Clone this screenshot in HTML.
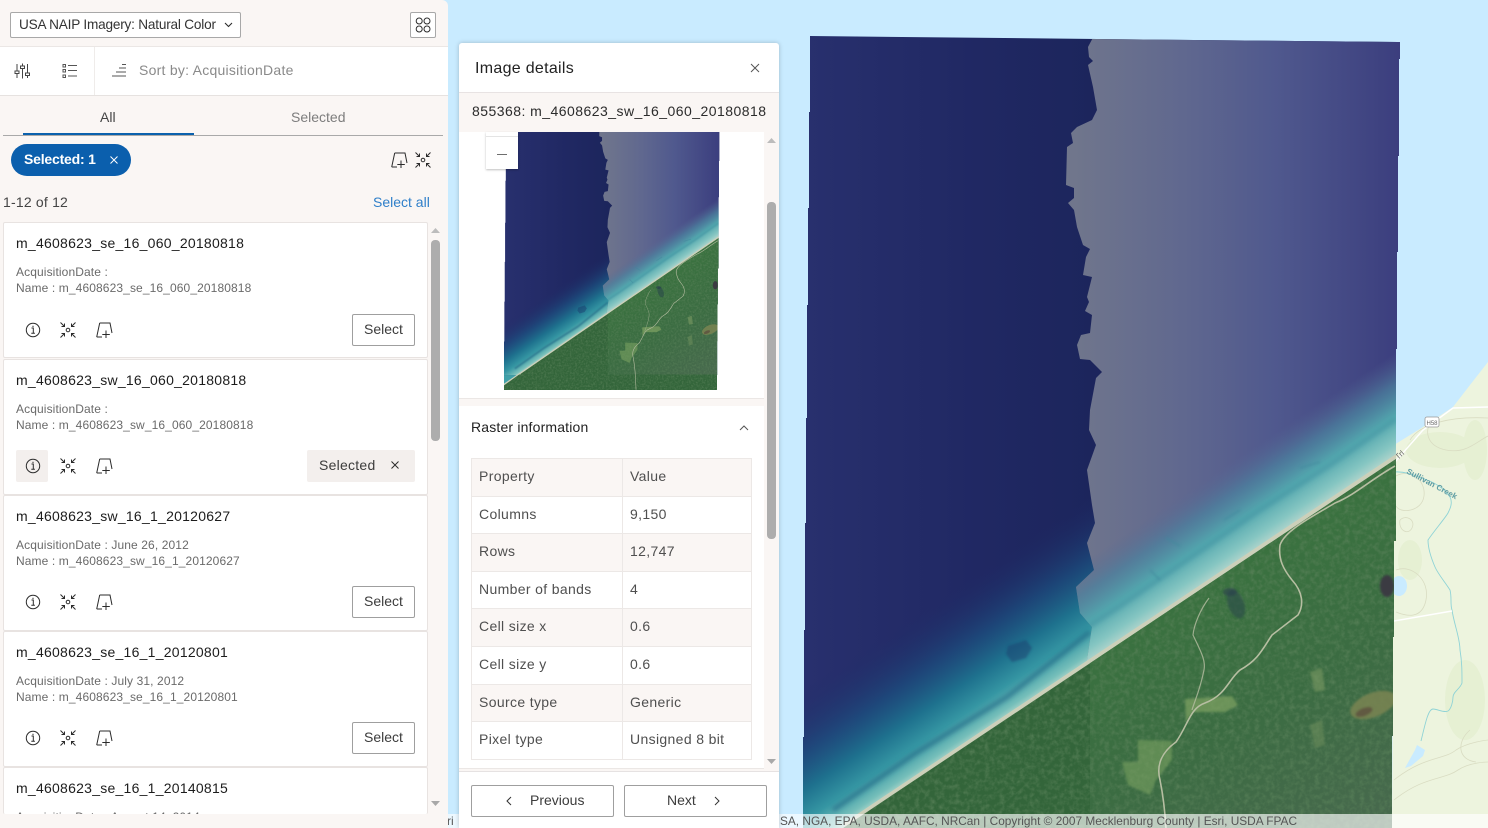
<!DOCTYPE html>
<html><head><meta charset="utf-8"><style>
html,body{margin:0;padding:0;width:1488px;height:828px;overflow:hidden;background:#c9ebff;font-family:"Liberation Sans",sans-serif;color:#323232}
.a{position:absolute}
.t{position:absolute;white-space:nowrap;line-height:16px}
#left{position:absolute;left:0;top:0;width:448px;height:828px;background:#faf6f4;border-top-right-radius:6px;overflow:hidden}
.card{position:absolute;left:3px;width:423px;height:134px;background:#fff;border:1px solid #e8e3e1;border-radius:2px;overflow:hidden}
.card .ti{position:absolute;left:12px;top:12px;font-size:14px;color:#1c1c1c;white-space:nowrap;line-height:17px;letter-spacing:.25px}
.card .d{position:absolute;left:12px;top:40.5px;font-size:12px;color:#6a6a6a;line-height:16.4px;white-space:nowrap;letter-spacing:.11px}
.btn{position:absolute;border:1px solid #9f9f9f;border-radius:2px;background:#fff;box-sizing:border-box;font-size:14px;color:#3c3c3c;text-align:center}
svg.i{position:absolute;fill:none;stroke:#2b2b2b;stroke-width:1}
#panel{position:absolute;left:459px;top:43px;width:320px;height:785px;background:#fff;border-radius:3px 3px 0 0;box-shadow:0 0 5px rgba(0,0,0,.22);overflow:hidden}
.row{position:absolute;left:471px;width:281px;box-sizing:border-box;border:1px solid #ece8e6;font-size:14px;color:#4f4f4f;letter-spacing:.35px}
.row span{position:absolute;top:50%;margin-top:-9.5px;line-height:16px;white-space:nowrap}
.row .k{left:7px}.row .v{left:158px}
.row i{position:absolute;left:150px;top:0;bottom:0;width:1px;background:#ece8e6}
</style></head><body>
<svg class="a" style="left:0;top:0" width="1488" height="828" viewBox="0 0 1488 828">
<defs>
<linearGradient id="deep" gradientUnits="userSpaceOnUse" x1="803" y1="0" x2="1095" y2="0"><stop offset="0" stop-color="#28306e"/><stop offset=".6" stop-color="#202863"/><stop offset="1" stop-color="#1c255c"/></linearGradient>
<linearGradient id="haze" gradientUnits="userSpaceOnUse" x1="1066" y1="0" x2="1400" y2="0"><stop offset="0" stop-color="#71778c"/><stop offset=".35" stop-color="#60688f"/><stop offset=".62" stop-color="#50598e"/><stop offset="1" stop-color="#3b3e7e"/></linearGradient>
<linearGradient id="shL" gradientUnits="userSpaceOnUse" x1="1090" y1="663" x2="1013" y2="548"><stop offset="0" stop-color="#b5d8cc"/><stop offset=".06" stop-color="#76bfba"/><stop offset=".2" stop-color="#3596a3"/><stop offset=".38" stop-color="#1e7590" stop-opacity=".95"/><stop offset=".62" stop-color="#1c5080" stop-opacity=".72"/><stop offset="1" stop-color="#1f2a66" stop-opacity="0"/></linearGradient>
<linearGradient id="shR" gradientUnits="userSpaceOnUse" x1="1090" y1="663" x2="1041" y2="590"><stop offset="0" stop-color="#b5d6cd"/><stop offset=".14" stop-color="#86c6c2"/><stop offset=".4" stop-color="#53a7ae"/><stop offset=".7" stop-color="#4c829f" stop-opacity=".72"/><stop offset="1" stop-color="#566a94" stop-opacity="0"/></linearGradient>
<linearGradient id="frs" gradientUnits="userSpaceOnUse" x1="1150" y1="600" x2="1300" y2="860"><stop offset="0" stop-color="#3a723f"/><stop offset=".5" stop-color="#3b6c42"/><stop offset="1" stop-color="#47694d"/></linearGradient>
<filter id="b2" x="-20%" y="-20%" width="140%" height="140%"><feGaussianBlur stdDeviation="2.2"/></filter>
<filter id="b1" x="-10%" y="-10%" width="120%" height="120%"><feGaussianBlur stdDeviation="1"/></filter>
<filter id="noise" x="0" y="0" width="100%" height="100%"><feTurbulence type="fractalNoise" baseFrequency=".2" numOctaves="3" seed="4"/><feColorMatrix values="0 0 0 0 .1  0 0 0 0 .22  0 0 0 0 .1  1.5 0 0 0 -.6"/></filter>
<clipPath id="cp"><polygon points="810,36 1097,39 1400,42 1400,59 1399,59 1399,156 1398,156 1398,252 1397,252 1397,349 1396,349 1396,541 1394,541 1394,637 1393,637 1393,736 1392,736 1392,828 803,828 803,737 804,737 804,630 805,630 805,523 806,523 806,418 807,418 807,305 808,305 808,208 809,208 809,112 810,112"/></clipPath>
<clipPath id="hz"><polygon points="1097,30 1088,47 1089,57 1093,61 1088,65 1093,87 1097,110 1092,120 1077,127 1071,133 1073,143 1067,147 1066,185 1074,188 1074,198 1068,203 1074,210 1077,227 1083,245 1090,249 1086,257 1083,275 1092,277 1087,297 1089,302 1085,311 1092,315 1090,333 1081,335 1077,345 1080,359 1090,360 1102,372 1096,378 1090,410 1089,430 1096,445 1087,470 1092,505 1095,523 1087,543 1094,570 1076,587 1080,613 1092,627 1087,660 1090,828 1420,828 1420,30"/></clipPath>
<clipPath id="ld"><polygon points="1402,455 843,828 1402,828"/></clipPath>
<clipPath id="ldx"><polygon points="845,826 1392,826 1392,868 803,868 803,855"/></clipPath>
<g id="scene"><g clip-path="url(#cp)">
<rect x="803" y="30" width="598" height="798" fill="url(#deep)"/>
<rect x="803" y="30" width="598" height="798" fill="url(#shL)"/>
<g filter="url(#b2)" fill="none" stroke="#1a5f80" opacity=".55"><path d="M1090 632 L1007 697 L916 753 L833 810" stroke-width="5"/></g>
<g filter="url(#b1)" fill="#1d3f6f" opacity=".5"><path d="M1008 646l18-6 6 8-6 10-14 4-6-8z"/></g>
<g clip-path="url(#hz)"><rect x="1060" y="30" width="341" height="798" fill="url(#haze)"/><rect x="1060" y="30" width="341" height="798" fill="url(#shR)"/>
<g filter="url(#b2)" fill="none" stroke="#3d8fa0" opacity=".5"><path d="M1396 419 L1330 465 L1260 510 L1190 558 L1120 606 L1080 632" stroke-width="5"/></g>
<g filter="url(#b1)" fill="none" stroke="#40889c" opacity=".5" stroke-width="2"><path d="M1300 468l20-6M1240 510l-16 10M1180 546l-14-8M1150 570l10 10"/></g></g>
<path d="M1400 455 L845 826" stroke="#ccd0ba" stroke-width="6" fill="none"/>
<g clip-path="url(#ld)"><polygon points="843,828 1402,447 1402,828" fill="#33653a"/>
<polygon points="1090,660 1402,452 1402,828 1090,828" fill="url(#frs)"/>
<rect x="843" y="447" width="559" height="381" filter="url(#noise)"/>
<g filter="url(#b1)"><polygon points="1185,699 1232,696 1238,705 1225,712 1193,712 1186,722" fill="#7fa262" opacity=".7"/><polygon points="1138,740 1172,741 1172,760 1156,780 1150,795 1128,785 1122,762 1138,762" fill="#78a05f" opacity=".6"/><polygon points="1310,672 1322,668 1325,690 1315,692" fill="#7b9a62" opacity=".6"/><polygon points="1310,725 1322,720 1325,745 1315,748" fill="#70925c" opacity=".5"/>
<ellipse cx="1373" cy="705" rx="24" ry="12" fill="#7a8451" opacity=".85" transform="rotate(-22 1373 705)"/><ellipse cx="1364" cy="712" rx="9" ry="4" fill="#5a4a3c" opacity=".7" transform="rotate(-22 1364 712)"/>
<ellipse cx="1387" cy="586" rx="7" ry="11" fill="#3a3a42"/><ellipse cx="1236" cy="604" rx="8" ry="15" fill="#2b4d48" opacity=".65" transform="rotate(-20 1236 604)"/><ellipse cx="1230" cy="592" rx="7" ry="4" fill="#2c3f50" opacity=".6"/></g>
<g fill="none" stroke="#b7bea2" stroke-width="1.6"><path d="M1395 466 C1370 480 1355 495 1335 503 C1315 515 1285 530 1280 545 C1278 560 1284 570 1292 580 C1303 592 1304 605 1298 615 L1272 635 C1262 650 1258 660 1240 670 C1228 680 1226 695 1205 703 C1190 708 1188 725 1176 742 C1162 752 1156 765 1160 780 C1163 795 1165 812 1166 828"/><path d="M1209 598 C1200 610 1194 625 1193 635 C1200 650 1206 660 1204 670 C1200 690 1195 700 1192 710" stroke-width="1.2" opacity=".8"/></g></g>
</g></g>
</defs>
<polygon points="1394,445 1423,427 1453,407 1470,385 1488,362 1488,828 1392,828" fill="#edf4de"/>
<g fill="#e6f0d3"><ellipse cx="1440" cy="450" rx="34" ry="18"/><ellipse cx="1465" cy="700" rx="20" ry="40"/><ellipse cx="1410" cy="560" rx="12" ry="20"/><ellipse cx="1475" cy="450" rx="12" ry="30"/></g>
<g fill="none" stroke="#d9dcc2" stroke-width=".8"><path d="M1396 476c14-8 30 4 28 20s-24 18-28 10M1400 520c6-6 16 0 12 8s-14 2-12-8M1396 570c16-6 34 10 30 30s-20 16-30 12M1394 780c30-24 50-20 62-30 12-8 32-10 32-10M1394 800c30-24 50-20 64-30 12-8 30-8 30-8M1470 730c-14 12-12 30 6 32M1432 420c-8 10-6 26 14 30s30-8 42-14M1410 440c10-16 40-24 78-22"/></g>
<ellipse cx="1399" cy="586" rx="8" ry="10" fill="#c9ebff"/><path d="M1405 768l10-18 2-5 8 5-2 6-12 10z" fill="#c9ebff"/>
<g fill="none"><path d="M1394 472c12-1 22 4 33 8s18 10 23 17c3 6 0 12-2 16s-14 18-20 27c0 10 4 20 7 27s10 15 15 23c2 8 0 14 2 20 2 14 8 28 8 40 2 12 2 22 2 33-2 6-9 9-9 14s-2 12-5 14c-5 2-10-2-15-2s-8 16-12 32" stroke="#8fd3d6" stroke-width=".9"/><path d="M1394 621l58-10M1395 462l28-32 30-22 35-1" stroke="#fff" stroke-width="1.4"/></g>
<rect x="1425" y="417" width="14" height="10" rx="2" fill="#fff" stroke="#999" stroke-width=".8"/><text x="1432" y="425" font-size="6" fill="#666" text-anchor="middle">H58</text>
<text x="1398" y="460" font-size="8" fill="#6d6d6d" transform="rotate(-42 1398 460)">Trl</text>
<text x="1406" y="473" font-size="8" font-weight="bold" fill="#5d9ba2" textLength="56" transform="rotate(28 1406 473)">Sullivan Creek</text>
<use href="#scene"/>
<rect x="0" y="814" width="1488" height="14" fill="#fff" opacity=".65"/>
<text x="447" y="825" font-size="12" fill="#555">ri</text>
<text x="780" y="825" font-size="12" fill="#555" textLength="517" lengthAdjust="spacingAndGlyphs">SA, NGA, EPA, USDA, AAFC, NRCan | Copyright © 2007 Mecklenburg County | Esri, USDA FPAC</text>
</svg>

<div id="left">
<div class="btn" style="left:10px;top:12px;width:231px;height:26px;border-color:#a8a8a8"></div>
<div class="t" id="dd" style="left:19px;top:17px;font-size:13.6px;color:#333;letter-spacing:-.2px">USA NAIP Imagery: Natural Color</div>
<svg class="i" style="left:224px;top:20px" width="9" height="9" viewBox="0 0 9 9"><path d="M1 3l3.5 3.5L8 3" stroke-width="1.1"/></svg>
<div class="btn" style="left:410px;top:12px;width:26px;height:26px;border-color:#a8a8a8"></div>
<svg class="i" style="left:414px;top:16px" width="18" height="18" viewBox="0 0 18 18"><circle cx="5.2" cy="5" r="3"/><circle cx="13" cy="5" r="3"/><circle cx="5.2" cy="13" r="3"/><circle cx="13" cy="13" r="3"/></svg>
<div class="a" style="left:0;top:46px;width:448px;height:50px;background:#fff;border-top:1px solid #ebe7e5;border-bottom:1px solid #e6e2e0;box-sizing:border-box"></div>
<div class="a" style="left:94px;top:47px;width:1px;height:48px;background:#efecea"></div>
<svg class="i" style="left:14px;top:62px;stroke:#444" width="18" height="18" viewBox="0 0 18 18"><path d="M3 2v14M8.500 1.500v15M13.500 2v14"/><rect x="1" y="9" width="4" height="2.500" fill="#fff"/><rect x="6.500" y="4" width="4" height="2.500" fill="#fff"/><rect x="11.500" y="11" width="4" height="2.500" fill="#fff"/></svg>
<svg class="i" style="left:62px;top:63px;stroke:#555" width="16" height="16" viewBox="0 0 16 16"><rect x="1" y="1.500" width="2.500" height="2.500"/><rect x="1" y="6.500" width="2.500" height="2.500"/><rect x="1" y="12" width="2.500" height="2.500"/><path d="M6 2.500h9M6 7.500h9M6 13h9"/></svg>
<svg class="i" style="left:111px;top:63px;stroke:#555" width="16" height="16" viewBox="0 0 16 16"><path d="M11 1.500h4M8 5h7M5 9h10M1 13h14"/></svg>
<div class="t" id="sort" style="left:139px;top:62px;font-size:14px;color:#8a8a8a;letter-spacing:.25px">Sort by: AcquisitionDate</div>
<div class="t" style="left:100px;top:109px;font-size:14px;color:#444">All</div>
<div class="t" style="left:291px;top:109px;font-size:14px;color:#7d7d7d">Selected</div>
<div class="a" style="left:3px;top:135px;width:440px;height:1px;background:#a9a9a9"></div>
<div class="a" style="left:23px;top:133px;width:171px;height:2px;background:#0b61ad"></div>
<div class="a" style="left:11px;top:144px;width:120px;height:32px;border-radius:16px;background:#0b5fad"></div>
<div class="t" style="left:24px;top:151px;font-size:14px;font-weight:bold;color:#fff;letter-spacing:-.2px">Selected: 1</div>
<svg class="i" style="left:109px;top:155px;stroke:#fff" width="10" height="10" viewBox="0 0 10 10"><path d="M1.500 1.500l7 7M8.500 1.500l-7 7"/></svg>
<svg class="i" style="left:390px;top:151px" width="18" height="18" viewBox="0 0 18 18"><path d="M4.700 2h10.300l2 10M1.700 16L4.700 2M1.700 16H7M11 9.500v7.500M7.300 13.500h7.500"/></svg>
<svg class="i" style="left:414px;top:151px" width="18" height="18" viewBox="0 0 18 18"><circle cx="9" cy="9" r="1.800"/><path d="M1.500 1.500l4 4M5.500 2.500v3h-3M16.500 1.500l-4 4M12.500 2.500v3h3M1.500 16.500l4-4M5.500 15.500v-3h-3M16.500 16.500l-4-4M12.500 15.500v-3h3"/></svg>
<div class="t" style="left:3px;top:194px;font-size:14px;color:#444;letter-spacing:.2px">1-12 of 12</div>
<div class="t" id="sa" style="left:373px;top:194px;font-size:14px;color:#2f7fc9">Select all</div>

<div class="card" style="top:222px"><div class="ti">m_4608623_se_16_060_20180818</div><div class="d" style="top:41px">AcquisitionDate :<br>Name : m_4608623_se_16_060_20180818</div></div>
<div class="card" style="top:359px"><div class="ti">m_4608623_sw_16_060_20180818</div><div class="d">AcquisitionDate :<br>Name : m_4608623_sw_16_060_20180818</div></div>
<div class="card" style="top:495px"><div class="ti">m_4608623_sw_16_1_20120627</div><div class="d">AcquisitionDate : June 26, 2012<br>Name : m_4608623_sw_16_1_20120627</div></div>
<div class="card" style="top:631px"><div class="ti">m_4608623_se_16_1_20120801</div><div class="d">AcquisitionDate : July 31, 2012<br>Name : m_4608623_se_16_1_20120801</div></div>
<div class="card" style="top:767px;height:46px;border-bottom:0"><div class="ti">m_4608623_se_16_1_20140815</div><div class="d">AcquisitionDate : August 14, 2014</div></div>
<div class="a" style="left:16px;top:450px;width:32px;height:32px;background:#f3efed;border-radius:2px"></div>
<svg width="0" height="0" style="position:absolute"><defs>
<g id="ic" fill="none" stroke="#2b2b2b" stroke-width="1"><circle cx="17" cy="16" r="6.700"/><path d="M15.500 14h1.800v5M15.300 19.300h3.600M17 11.800v1.200"/><g transform="translate(43,7)"><circle cx="9" cy="9" r="1.800"/><path d="M1.500 1.500l4 4M5.500 2.500v3h-3M16.500 1.500l-4 4M12.500 2.500v3h3M1.500 16.500l4-4M5.500 15.500v-3h-3M16.500 16.500l-4-4M12.500 15.500v-3h3"/></g><g transform="translate(79,7)"><path d="M4.700 2h10.300l2 10M1.700 16L4.700 2M1.700 16H7M11 9.500v7.500M7.300 13.500h7.500"/></g></g></defs></svg>
<svg class="a" style="left:16px;top:314px" width="104" height="32"><use href="#ic"/></svg>
<svg class="a" style="left:16px;top:450px" width="104" height="32"><use href="#ic"/></svg>
<svg class="a" style="left:16px;top:586px" width="104" height="32"><use href="#ic"/></svg>
<svg class="a" style="left:16px;top:722px" width="104" height="32"><use href="#ic"/></svg>
<div class="btn" style="left:352px;top:314px;width:63px;height:32px;line-height:29px">Select</div>
<div class="btn" style="left:352px;top:586px;width:63px;height:32px;line-height:29px">Select</div>
<div class="btn" style="left:352px;top:722px;width:63px;height:32px;line-height:29px">Select</div>
<div class="a" style="left:307px;top:450px;width:108px;height:32px;background:#f3efed;border-radius:2px"></div>
<div class="t" style="left:319px;top:457px;font-size:14px;color:#3c3c3c;letter-spacing:.25px">Selected</div>
<svg class="i" style="left:390px;top:460px" width="10" height="10" viewBox="0 0 10 10"><path d="M1.500 1.500l7 7M8.500 1.500l-7 7"/></svg>
<div class="a" style="left:431px;top:240px;width:9px;height:201px;background:#adadad;border-radius:4px"></div>
<svg class="a" style="left:430px;top:227px" width="11" height="8"><path d="M1 6h9L5.500 1z" fill="#bcbcbc"/></svg>
<svg class="a" style="left:430px;top:800px" width="11" height="8"><path d="M1 1h9L5.500 6z" fill="#a8a8a8"/></svg>
</div>

<div id="panel">
<div class="a" style="left:0;top:49px;width:320px;height:1px;background:#e8e3e3"></div>
<div class="a" style="left:0;top:50px;width:320px;height:39px;background:#faf6f4"></div>
<div class="a" style="left:305px;top:89px;width:15px;height:640px;background:#faf6f4"></div>
<div class="a" style="left:308px;top:159px;width:9px;height:337px;background:#adadad;border-radius:4px"></div>
<svg class="a" style="left:307px;top:94px" width="11" height="8"><path d="M1 6h9L5.500 1z" fill="#bcbcbc"/></svg>
<svg class="a" style="left:307px;top:715px" width="11" height="8"><path d="M1 1h9L5.500 6z" fill="#a8a8a8"/></svg>
<div class="a" style="left:0;top:355px;width:305px;height:1px;background:#ebe7e5"></div>
<div class="a" style="left:0;top:356px;width:305px;height:7px;background:#faf6f4"></div>
<div class="a" style="left:0;top:725px;width:305px;height:3px;background:#faf6f4;border-top:1px solid #ebe7e5;box-sizing:border-box"></div>
<div class="a" style="left:0;top:728px;width:320px;height:1px;background:#e6e2e2"></div>
</div>
<div class="t" id="h1" style="left:475px;top:60px;font-size:16px;line-height:18px;color:#222;letter-spacing:.3px">Image details</div>
<svg class="i" style="left:750px;top:63px;stroke:#555" width="10" height="10" viewBox="0 0 10 10"><path d="M1 1l8 8M9 1l-8 8"/></svg>
<div class="t" id="h2" style="left:472px;top:103px;font-size:14px;color:#2b2b2b;letter-spacing:.46px">855368: m_4608623_sw_16_060_20180818</div>
<svg class="a" style="left:504px;top:132px" width="216" height="258" viewBox="803 174 597 693.500" preserveAspectRatio="none"><polygon points="803,824 850,824 803,856" fill="#3fa0a8"/><use href="#scene"/><path d="M848 824L803 854" stroke="#ccd0ba" stroke-width="6"/><rect x="803" y="824" width="589" height="44" fill="#33653a" clip-path="url(#ldx)"/><rect x="803" y="824" width="589" height="44" filter="url(#noise)" clip-path="url(#ldx)"/><path d="M1166 826L1168 867" stroke="#b7bea2" stroke-width="1.6"/></svg>
<div class="a" style="left:486px;top:132px;width:32px;height:37px;background:#fff;box-shadow:0 1px 2px rgba(0,0,0,.25)"></div>
<div class="a" style="left:486px;top:136px;width:32px;height:1px;background:#e4e4e4"></div>
<div class="a" style="left:497px;top:154px;width:10px;height:1px;background:#6e6e6e"></div>
<div class="t" id="ri" style="left:471px;top:419px;font-size:14px;color:#222;letter-spacing:.17px">Raster information</div>
<svg class="i" style="left:739px;top:424px;stroke:#555" width="10" height="8" viewBox="0 0 10 8"><path d="M1 6l4-4 4 4"/></svg>
<div class="row" style="top:458px;height:39px;background:#faf6f4"><span class="k">Property</span><span class="v">Value</span><i></i></div>
<div class="row" style="top:496px;height:38px"><span class="k">Columns</span><span class="v">9,150</span><i></i></div>
<div class="row" style="top:533px;height:39px;background:#faf6f4"><span class="k">Rows</span><span class="v">12,747</span><i></i></div>
<div class="row" style="top:571px;height:38px"><span class="k">Number of bands</span><span class="v">4</span><i></i></div>
<div class="row" style="top:608px;height:39px;background:#faf6f4"><span class="k">Cell size x</span><span class="v">0.6</span><i></i></div>
<div class="row" style="top:646px;height:39px"><span class="k">Cell size y</span><span class="v">0.6</span><i></i></div>
<div class="row" style="top:684px;height:38px;background:#faf6f4"><span class="k">Source type</span><span class="v">Generic</span><i></i></div>
<div class="row" style="top:721px;height:39px"><span class="k">Pixel type</span><span class="v">Unsigned 8 bit</span><i></i></div>
<div class="btn" style="left:471px;top:785px;width:143px;height:32px"></div>
<div class="btn" style="left:624px;top:785px;width:143px;height:32px"></div>
<div class="t" style="left:530px;top:792px;font-size:14px;color:#3c3c3c">Previous</div>
<div class="t" style="left:667px;top:792px;font-size:14px;color:#3c3c3c">Next</div>
<svg class="i" style="left:505px;top:796px;stroke:#333" width="8" height="10" viewBox="0 0 8 10"><path d="M6 1L2 5l4 4"/></svg>
<svg class="i" style="left:713px;top:796px;stroke:#333" width="8" height="10" viewBox="0 0 8 10"><path d="M2 1l4 4-4 4"/></svg>
</body></html>
